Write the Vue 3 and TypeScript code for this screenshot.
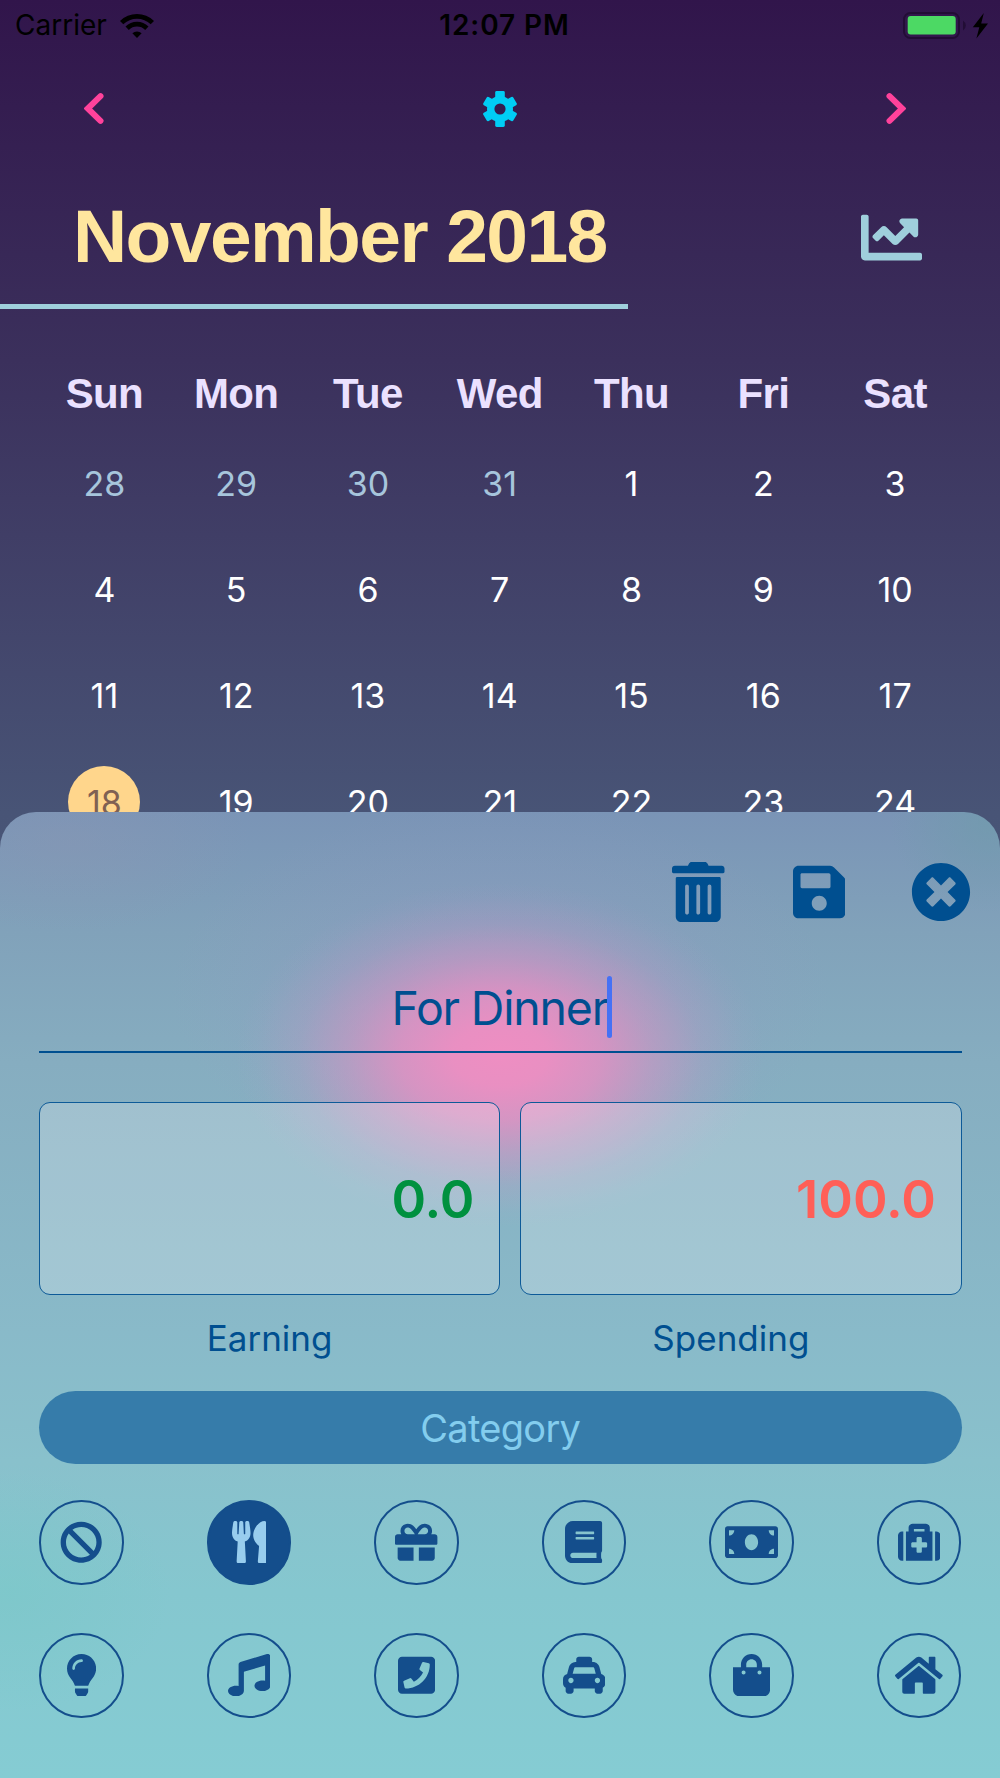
<script setup lang="ts">
interface Icon {
  name: string
  w: number
  d: string
}

const weekdays: string[] = ['Sun', 'Mon', 'Tue', 'Wed', 'Thu', 'Fri', 'Sat']
const leading: number[] = [28, 29, 30, 31]
const days = [
  ...leading.map((n) => ({ n, outside: true, selected: false })),
  ...Array.from({ length: 24 }, (_, i) => ({ n: i + 1, outside: false, selected: i + 1 === 18 })),
]
const gearTeeth: number[] = [0, 60, 120, 180, 240, 300]

const actions: Icon[] = [
  { name: 'trash', w: 448, d: 'M0 84V56c0-13.3 10.7-24 24-24h112l9.4-18.7c4-8.2 12.3-13.3 21.4-13.3h114.3c9.1 0 17.4 5.1 21.5 13.3L312 32h112c13.3 0 24 10.7 24 24v28c0 6.6-5.4 12-12 12H12C5.4 96 0 90.6 0 84zm416 56v324c0 26.5-21.5 48-48 48H80c-26.5 0-48-21.5-48-48V140c0-6.6 5.4-12 12-12h360c6.6 0 12 5.4 12 12zm-272 68c0-8.8-7.2-16-16-16s-16 7.2-16 16v224c0 8.8 7.2 16 16 16s16-7.2 16-16V208zm96 0c0-8.8-7.2-16-16-16s-16 7.2-16 16v224c0 8.8 7.2 16 16 16s16-7.2 16-16V208zm96 0c0-8.8-7.2-16-16-16s-16 7.2-16 16v224c0 8.8 7.2 16 16 16s16-7.2 16-16V208z' },
  { name: 'save', w: 448, d: 'M433.941 129.941l-83.882-83.882A48 48 0 0 0 316.118 32H48C21.49 32 0 53.49 0 80v352c0 26.51 21.49 48 48 48h352c26.51 0 48-21.49 48-48V163.882a48 48 0 0 0-14.059-33.941zM224 416c-35.346 0-64-28.654-64-64 0-35.346 28.654-64 64-64s64 28.654 64 64c0 35.346-28.654 64-64 64zm96-304.52V212c0 6.627-5.373 12-12 12H76c-6.627 0-12-5.373-12-12V108c0-6.627 5.373-12 12-12h228.52c3.183 0 6.235 1.264 8.485 3.515l3.48 3.48A11.996 11.996 0 0 1 320 111.48z' },
  { name: 'close', w: 512, d: 'M256 8C119 8 8 119 8 256s111 248 248 248 248-111 248-248S393 8 256 8zm121.6 313.1c4.7 4.7 4.7 12.3 0 17L338 377.6c-4.7 4.7-12.3 4.7-17 0L256 312l-65.1 65.6c-4.7 4.7-12.3 4.7-17 0L134.4 338c-4.7-4.7-4.7-12.3 0-17l65.6-65-65.6-65.1c-4.7-4.7-4.7-12.3 0-17l39.6-39.6c4.7-4.7 12.3-4.7 17 0l65 65.7 65.1-65.6c4.7-4.7 12.3-4.7 17 0l39.6 39.6c4.7 4.7 4.7 12.3 0 17L312 256l65.6 65.1z' },
]

const selectedCategory = 'food'
const categories: Icon[] = [
  { name: 'none', w: 512, d: 'M256 8C119.034 8 8 119.033 8 256s111.034 248 248 248 248-111.034 248-248S392.967 8 256 8zm130.108 117.892c65.448 65.448 70 165.481 20.677 235.637L150.47 105.216c70.204-49.356 170.226-44.735 235.638 20.676zM125.892 386.108c-65.448-65.448-70-165.481-20.677-235.637L361.53 406.784c-70.203 49.356-170.226 44.736-235.638-20.676z' },
  { name: 'food', w: 416, d: 'M207.9 15.2c.8 4.7 16.1 94.5 16.1 128.8 0 52.3-27.8 89.6-68.9 104.6L168 486.7c.7 13.7-10.2 25.3-24 25.3H80c-13.7 0-24.7-11.5-24-25.3l12.9-238.1C27.7 233.6 0 196.2 0 144 0 109.6 15.3 19.9 16.1 15.2 19.3-5.1 61.4-5.4 64 16.3v141.2c1.3 3.4 15.1 3.2 16 0 1.4-25.3 7.9-139.2 8-141.8 3.3-20.8 44.7-20.8 47.9 0 .2 2.7 6.6 116.5 8 141.8.9 3.2 14.8 3.4 16 0V16.3c2.6-21.6 44.8-21.4 47.9-1.1zm119.2 285.7l-15 185.1c-1.2 14 9.9 26 23.9 26h56c13.3 0 24-10.7 24-24V24c0-13.2-10.7-24-24-24-82.5 0-221.4 178.5-64.9 300.9z' },
  { name: 'gift', w: 512, d: 'M32 448c0 17.7 14.3 32 32 32h160V320H32v128zm256 32h160c17.7 0 32-14.3 32-32V320H288v160zm192-320h-42.1c6.2-12.1 10.1-25.5 10.1-40 0-48.5-39.5-88-88-88-41.6 0-68.5 21.3-103 68.3-34.5-47-61.4-68.3-103-68.3-48.5 0-88 39.5-88 88 0 14.5 3.8 27.9 10.1 40H32c-17.7 0-32 14.3-32 32v80c0 8.8 7.2 16 16 16h480c8.8 0 16-7.2 16-16v-80c0-17.7-14.3-32-32-32zm-326.1 0c-22.1 0-40-17.9-40-40s17.9-40 40-40c19.9 0 34.6 3.3 86.1 80h-86.1zm206.1 0h-86.1c51.4-76.5 65.7-80 86.1-80 22.1 0 40 17.9 40 40s-17.9 40-40 40z' },
  { name: 'book', w: 448, d: 'M448 360V24c0-13.3-10.7-24-24-24H96C43 0 0 43 0 96v320c0 53 43 96 96 96h328c13.3 0 24-10.7 24-24v-16c0-7.5-3.5-14.3-8.9-18.7-4.2-15.4-4.2-59.3 0-74.7 5.4-4.3 8.9-11.1 8.9-18.6zM128 134c0-3.3 2.7-6 6-6h212c3.3 0 6 2.7 6 6v20c0 3.3-2.7 6-6 6H134c-3.3 0-6-2.7-6-6v-20zm0 64c0-3.3 2.7-6 6-6h212c3.3 0 6 2.7 6 6v20c0 3.3-2.7 6-6 6H134c-3.3 0-6-2.7-6-6v-20zm253.4 250H96c-17.7 0-32-14.3-32-32 0-17.6 14.4-32 32-32h285.4c-1.9 17.1-1.9 46.9 0 64z' },
  { name: 'money', w: 640, d: 'M608 64H32C14.33 64 0 78.33 0 96v320c0 17.67 14.33 32 32 32h576c17.67 0 32-14.33 32-32V96c0-17.67-14.33-32-32-32zM48 400v-64c35.35 0 64 28.65 64 64H48zm0-224v-64h64c0 35.35-28.65 64-64 64zm272 176c-44.19 0-80-42.99-80-96 0-53.02 35.82-96 80-96s80 42.98 80 96c0 53.03-35.83 96-80 96zm272 48h-64c0-35.35 28.65-64 64-64v64zm0-224c-35.35 0-64-28.65-64-64h64v64z' },
  { name: 'medical', w: 512, d: 'M96 480h320V128h-32V80c0-26.51-21.49-48-48-48H176c-26.51 0-48 21.49-48 48v48H96v352zm96-384h128v32H192V96zm320 80v256c0 26.51-21.49 48-48 48h-16V128h16c26.51 0 48 21.49 48 48zM64 480H48c-26.51 0-48-21.49-48-48V176c0-26.51 21.49-48 48-48h16v352zm288-208v32c0 8.837-7.163 16-16 16h-48v48c0 8.837-7.163 16-16 16h-32c-8.837 0-16-7.163-16-16v-48h-48c-8.837 0-16-7.163-16-16v-32c0-8.837 7.163-16 16-16h48v-48c0-8.837 7.163-16 16-16h32c8.837 0 16 7.163 16 16v48h48c8.837 0 16 7.163 16 16z' },
  { name: 'utilities', w: 352, d: 'M96.06 454.35c.01 6.29 1.87 12.45 5.36 17.69l17.09 25.69a31.99 31.99 0 0 0 26.64 14.28h61.71a31.99 31.99 0 0 0 26.64-14.28l17.09-25.69a31.989 31.989 0 0 0 5.36-17.69l.04-38.35H96.01l.05 38.35zM0 176c0 44.37 16.45 84.85 43.56 115.78 16.52 18.85 42.36 58.23 52.21 91.45.04.26.07.52.11.78h160.24c.04-.26.07-.51.11-.78 9.85-33.22 35.69-72.6 52.21-91.45C335.55 260.85 352 220.37 352 176 352 78.61 272.91-.3 175.45 0 73.44.31 0 82.97 0 176zm176-80c-44.11 0-80 35.89-80 80 0 8.84-7.16 16-16 16s-16-7.16-16-16c0-61.76 50.24-112 112-112 8.84 0 16 7.16 16 16s-7.16 16-16 16z' },
  { name: 'music', w: 512, d: 'M511.99 32.01c0-21.71-21.1-37.01-41.6-30.51L150.4 96c-13.3 4.2-22.4 16.5-22.4 30.5v261.42c-10.05-2.38-20.72-3.92-32-3.92-53.02 0-96 28.65-96 64s42.98 64 96 64 96-28.65 96-64V214.31l256-75.02v184.63c-10.05-2.38-20.72-3.92-32-3.92-53.02 0-96 28.65-96 64s42.98 64 96 64 96-28.65 96-64l-.01-351.99z' },
  { name: 'phone', w: 448, d: 'M400 32H48C21.49 32 0 53.49 0 80v352c0 26.51 21.49 48 48 48h352c26.51 0 48-21.49 48-48V80c0-26.51-21.49-48-48-48zM94 416c-7.033 0-13.057-4.873-14.616-11.627l-14.998-65a15 15 0 0 1 8.707-17.16l69.998-29.999a15 15 0 0 1 17.518 4.289l30.997 37.885c48.944-22.963 88.297-62.858 110.781-110.78l-37.886-30.997a15.001 15.001 0 0 1-4.289-17.518l30-69.998a15 15 0 0 1 17.16-8.707l65 14.998A14.997 14.997 0 0 1 384 126c0 160.292-129.945 290-290 290z' },
  { name: 'taxi', w: 512, d: 'M462 241.64l-22-84.84c-9.6-35.2-41.6-60.8-76.8-60.8H352V64c0-17.67-14.33-32-32-32H192c-17.67 0-32 14.33-32 32v32h-11.2c-35.2 0-67.2 25.6-76.8 60.8l-22 84.84C21.41 248.04 0 273.47 0 304v48c0 23.63 12.95 44.04 32 55.12V448c0 17.67 14.33 32 32 32h32c17.67 0 32-14.33 32-32v-32h256v32c0 17.67 14.33 32 32 32h32c17.67 0 32-14.33 32-32v-40.88c19.05-11.09 32-31.5 32-55.12v-48c0-30.53-21.41-55.96-50-62.36zM96 352c-17.67 0-32-14.33-32-32s14.33-32 32-32 32 14.33 32 32-14.33 32-32 32zm20.55-112l17.2-66.36c2.23-8.16 9.59-13.64 15.06-13.64h214.4c5.47 0 12.83 5.48 14.85 12.86L395.48 240H116.55zM416 352c-17.67 0-32-14.33-32-32s14.33-32 32-32 32 14.33 32 32-14.33 32-32 32z' },
  { name: 'shopping', w: 448, d: 'M352 160v-32C352 57.42 294.579 0 224 0 153.42 0 96 57.42 96 128v32H0v272c0 44.183 35.817 80 80 80h288c44.183 0 80-35.817 80-80V160h-96zm-192-32c0-35.29 28.71-64 64-64s64 28.71 64 64v32H160v-32zm160 120c-13.255 0-24-10.745-24-24s10.745-24 24-24 24 10.745 24 24-10.745 24-24 24zm-192 0c-13.255 0-24-10.745-24-24s10.745-24 24-24 24 10.745 24 24-10.745 24-24 24z' },
  { name: 'home', w: 576, d: 'M488 312.7V456c0 13.3-10.7 24-24 24H348c-6.6 0-12-5.4-12-12V356c0-6.6-5.4-12-12-12h-72c-6.6 0-12 5.4-12 12v112c0 6.6-5.4 12-12 12H112c-13.3 0-24-10.7-24-24V312.7c0-3.6 1.6-7 4.4-9.3l188-154.8c4.4-3.6 10.8-3.6 15.3 0l188 154.8c2.7 2.3 4.3 5.7 4.3 9.3zm83.6-60.9L488 182.9V44.4c0-6.6-5.4-12-12-12h-56c-6.6 0-12 5.4-12 12V117l-89.5-73.7c-17.7-14.6-43.3-14.6-61 0L4.4 251.8c-5.1 4.2-5.8 11.8-1.6 16.9l25.5 31c4.2 5.1 11.8 5.8 16.9 1.6l235.2-193.7c4.4-3.6 10.8-3.6 15.3 0l235.2 193.7c5.1 4.2 12.7 3.5 16.9-1.6l25.5-31c4.2-5.2 3.4-12.7-1.7-16.9z' },
]
</script>

<template>
  <div class="screen">
    <header class="status">
      <div class="carrier">
        <span>Carrier</span>
        <svg class="wifi" viewBox="0 0 34 24">
          <path d="M17 24l-4.600-4.700a6.600 6.600 0 0 1 9.200 0z" />
          <path d="M5.500 12.500l3.300 3.400a11.700 11.700 0 0 1 16.400 0l3.300-3.400a16.400 16.400 0 0 0-23 0z" />
          <path d="M0 7l3.300 3.300a19.500 19.500 0 0 1 27.400 0L34 7a24.200 24.200 0 0 0-34 0z" />
        </svg>
      </div>
      <span class="clock">12:07 PM</span>
      <svg class="battery" viewBox="0 0 86 28">
        <rect x="1" y="1" width="55" height="25" rx="6.500" fill="none" stroke="#220d35" stroke-width="2" />
        <rect x="4.700" y="4" width="48" height="18.500" rx="3" fill="#4cd964" />
        <path d="M60 8.500v10q2.800-2 2.800-5t-2.800-5z" fill="#220d35" />
        <path d="M80.800 1l-11 14.200h6.500L73.400 26.500 85 11.500h-6.800z" fill="#000" />
      </svg>
    </header>

    <nav class="toolbar">
      <svg class="chevron" viewBox="0 0 20 31"><path d="M16.500 3.200L3.800 15.500l12.700 12.300" /></svg>
      <svg class="gear" viewBox="-17 -18 34 36">
        <circle r="9.300" fill="none" stroke="#00cdf5" stroke-width="7.400" />
        <rect
          v-for="a in gearTeeth"
          :key="a"
          x="-4.800"
          :y="a % 180 === 0 ? -18 : -17.300"
          width="9.600"
          height="8"
          rx="1.400"
          :transform="`rotate(${a})`"
        />
      </svg>
      <svg class="chevron" viewBox="0 0 20 31"><path d="M3.500 3.200l12.700 12.300L3.500 27.800" /></svg>
    </nav>

    <div class="heading">
      <h1>November 2018</h1>
      <svg class="chart" viewBox="0 0 512 512">
        <path d="M496 384H64V80c0-8.840-7.160-16-16-16H16C7.160 64 0 71.160 0 80v336c0 17.670 14.330 32 32 32h464c8.840 0 16-7.160 16-16v-32c0-8.840-7.160-16-16-16zM464 96H345.940c-21.380 0-32.090 25.850-16.970 40.970l32.400 32.400L288 242.750l-73.370-73.370c-12.500-12.500-32.760-12.500-45.250 0l-68.690 68.690c-6.250 6.250-6.250 16.380 0 22.630l22.620 22.620c6.250 6.250 16.380 6.250 22.630 0L192 237.250l73.370 73.370c12.500 12.500 32.760 12.500 45.250 0l96-96 32.400 32.400c15.120 15.120 40.970 4.410 40.970-16.970V112c.01-8.840-7.150-16-15.990-16z" />
      </svg>
    </div>
    <div class="rule"></div>

    <section class="calendar">
      <div class="weekdays">
        <span v-for="d in weekdays" :key="d">{{ d }}</span>
      </div>
      <div class="days">
        <div v-for="(day, i) in days" :key="i" class="cell">
          <span class="day" :class="{ outside: day.outside, selected: day.selected }">{{ day.n }}</span>
        </div>
      </div>
    </section>

    <section class="sheet">
      <div class="actions">
        <svg v-for="a in actions" :key="a.name" :class="a.name" :viewBox="`0 0 ${a.w} 512`"><path :d="a.d" /></svg>
      </div>

      <div class="title-field"><span>For Dinner</span><i class="caret"></i></div>

      <div class="amounts">
        <div class="amount earning">0.0</div>
        <div class="amount spending">100.0</div>
      </div>
      <div class="labels">
        <span>Earning</span>
        <span>Spending</span>
      </div>

      <div class="category">Category</div>

      <div class="grid">
        <div v-for="c in categories" :key="c.name" class="item" :class="{ active: c.name === selectedCategory }">
          <svg :viewBox="`0 0 ${c.w} 512`"><path :d="c.d" /></svg>
        </div>
      </div>
    </section>
  </div>
</template>

<style>
body {
  margin: 0;
}
</style>

<style scoped>
.screen {
  width: 1000px;
  height: 1778px;
  position: relative;
  overflow: hidden;
  background: linear-gradient(180deg, #31154b 0, #3b305c 360px, #485476 812px, #4a587a 1000px);
  font-family: Inter, 'Liberation Sans', sans-serif;
}
.status {
  height: 50px;
  display: grid;
  grid-template-columns: 1fr auto 1fr;
  align-items: center;
  color: #000;
  font-size: 28px;
  line-height: 51px;
}
.carrier {
  display: flex;
  align-items: center;
  gap: 13px;
  padding-left: 15px;
}
.wifi {
  width: 34px;
  height: 24px;
}
.clock {
  font-weight: 600;
  letter-spacing: 0.9px;
  padding-left: 9px;
}
.battery {
  width: 86px;
  height: 28px;
  justify-self: end;
  margin-right: 11px;
}
.toolbar {
  height: 117px;
  display: grid;
  grid-template-columns: 1fr auto 1fr;
  align-items: center;
  padding: 0 94px 0 84px;
}
.toolbar .chevron:last-child {
  justify-self: end;
}
.chevron {
  width: 20px;
  height: 31px;
  fill: none;
  stroke: #ff429b;
  stroke-width: 6;
  stroke-linecap: round;
}
.gear {
  width: 34px;
  height: 36px;
  margin: 0 -5px 0 5px;
  fill: #00cdf5;
}
.heading {
  height: 137px;
  display: flex;
  justify-content: space-between;
  align-items: center;
  padding: 0 78px 0 73px;
}
h1 {
  margin: 0;
  font: bold 75px/80px 'Liberation Sans', sans-serif;
  letter-spacing: -1.600px;
  color: #ffe69e;
}
.chart {
  width: 61px;
  height: 61px;
  margin-top: 3px;
  fill: #9fcfdc;
}
.rule {
  width: 628px;
  height: 5px;
  background: #9fcfdc;
}
.calendar {
  padding: 62px 39px 0 38.500px;
}
.weekdays {
  display: grid;
  grid-template-columns: repeat(7, 1fr);
  text-align: center;
  font: bold 42px/46px 'Liberation Sans', sans-serif;
  letter-spacing: -0.6px;
  color: #ebe1ff;
}
.days {
  display: grid;
  grid-template-columns: repeat(7, 1fr);
  grid-auto-rows: 106.200px;
  padding-top: 13px;
}
.cell {
  display: flex;
  align-items: center;
  justify-content: center;
}
.day {
  width: 72px;
  height: 72px;
  border-radius: 50%;
  text-align: center;
  font-size: 34px;
  line-height: 73px;
  color: #fff;
}
.day.outside {
  color: #a7c5dc;
}
.day.selected {
  background: #ffd68c;
  color: #7f6153;
}
.sheet {
  position: absolute;
  left: 0;
  right: 0;
  top: 812px;
  bottom: 0;
  box-sizing: border-box;
  padding: 50px 38.500px 0 39px;
  border-radius: 36px 36px 0 0;
  background:
    radial-gradient(ellipse 265px 172px at 500px 243px, rgba(238, 142, 194, 1) 0%, rgba(238, 142, 194, 0.95) 18%, rgba(236, 142, 195, 0.76) 38%, rgba(232, 144, 197, 0.45) 57%, rgba(226, 146, 200, 0.18) 76%, rgba(220, 150, 205, 0.04) 92%, rgba(220, 150, 205, 0) 100%),
    radial-gradient(ellipse 330px 190px at 500px 180px, rgba(152, 150, 196, 0.4) 0%, rgba(152, 150, 196, 0.22) 50%, rgba(152, 150, 196, 0) 100%),
    radial-gradient(ellipse 180px 90px at 70px 30px, rgba(140, 150, 178, 0.4), rgba(140, 150, 178, 0)),
    radial-gradient(ellipse 100px 90px at 990px 10px, rgba(112, 156, 172, 0.7), rgba(112, 156, 172, 0)),
    radial-gradient(ellipse 160px 120px at 10px 780px, rgba(122, 200, 200, 0.6), rgba(122, 200, 200, 0)),
    linear-gradient(180deg, #7a94b6 0, #81a2ba 120px, #86adc0 250px, #89bac9 520px, #89c1cc 650px, #85c7cf 780px, #85ccd3 966px);
  color: #004f90;
}
.actions {
  display: flex;
  justify-content: flex-end;
  align-items: center;
  margin-right: -9px;
}
.actions svg {
  height: 60px;
  width: auto;
  fill: currentColor;
}
.actions .save {
  margin: 0 65.500px 0 68px;
}
.title-field {
  height: 129px;
  display: flex;
  justify-content: center;
  align-items: center;
  border-bottom: 2px solid #004f90;
  font-size: 46.500px;
  line-height: 60px;
  letter-spacing: -1.200px;
}
.title-field span {
  position: relative;
  top: 21px;
}
.caret {
  position: relative;
  top: 20px;
  width: 5px;
  height: 62px;
  margin-right: -3px;
  margin-left: -1px;
  border-radius: 2.500px;
  background: #4571f5;
}
.amounts {
  display: grid;
  grid-template-columns: 461px 442px;
  justify-content: space-between;
  margin-top: 49px;
}
.amount {
  box-sizing: border-box;
  height: 193px;
  border: 1.300px solid #0d5a98;
  border-radius: 11px;
  background: rgba(255, 255, 255, 0.22);
  padding-right: 24.500px;
  text-align: right;
  font-size: 52.500px;
  font-weight: 600;
  line-height: 192px;
}
.earning {
  color: #00913f;
}
.spending {
  color: #ff5f57;
}
.labels {
  display: grid;
  grid-template-columns: 1fr 1fr;
  text-align: center;
  font-size: 35px;
  line-height: 44px;
  margin-top: 21px;
}
.category {
  margin-top: 31px;
  height: 73px;
  border-radius: 36.500px;
  background: #367caa;
  color: #83cdee;
  text-align: center;
  font-size: 38px;
  line-height: 74px;
  letter-spacing: -0.7px;
}
.grid {
  display: grid;
  grid-template-columns: repeat(6, 84.500px);
  justify-content: space-between;
  row-gap: 48.500px;
  margin-top: 36px;
}
.item {
  box-sizing: border-box;
  height: 84.500px;
  border: 2px solid #144e8c;
  border-radius: 50%;
  display: flex;
  align-items: center;
  justify-content: center;
}
.item svg {
  height: 42.400px;
  width: auto;
  fill: #144e8c;
}
.item.active {
  background: #144e8c;
}
.item.active svg {
  fill: #98cdee;
}
</style>
